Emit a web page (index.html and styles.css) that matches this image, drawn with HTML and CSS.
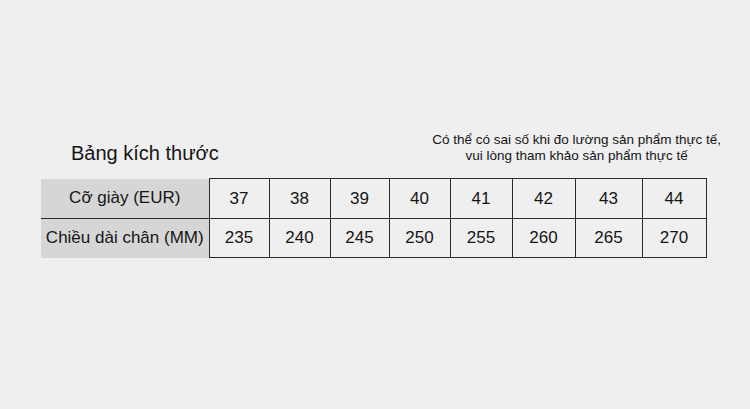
FILE: index.html
```html
<!DOCTYPE html>
<html lang="vi">
<head>
<meta charset="utf-8">
<link rel="stylesheet" href="styles.css">
</head>
<body>
<div class="page">
  <div class="head">
    <div class="title">Bảng kích thước</div>
    <div class="note">Có thể có sai số khi đo lường sản phẩm thực tế,<br>vui lòng tham khảo sản phẩm thực tế</div>
  </div>
  <table class="sizes">
    <colgroup>
      <col class="c0"><col class="c1"><col class="c2"><col class="c3"><col class="c4"><col class="c5"><col class="c6"><col class="c7"><col class="c8">
    </colgroup>
    <tr class="r1">
      <th>Cỡ giày (EUR)</th>
      <td>37</td><td>38</td><td>39</td><td>40</td><td>41</td><td>42</td><td>43</td><td>44</td>
    </tr>
    <tr class="r2">
      <th>Chiều dài chân (MM)</th>
      <td>235</td><td>240</td><td>245</td><td>250</td><td>255</td><td>260</td><td>265</td><td>270</td>
    </tr>
  </table>
</div>
</body>
</html>
```
FILE: styles.css
```css
html, body {
  margin: 0;
  padding: 0;
  background: #efefef;
}
body {
  width: 750px;
  height: 409px;
  font-family: "Liberation Sans", Arial, sans-serif;
  color: #151515;
}
.page {
  padding: 131px 30px 0 41px;
}
.head {
  display: flex;
  justify-content: space-between;
  align-items: flex-end;
  height: 36px;
}
.title {
  margin-left: 30px;
  font-size: 20px;
  line-height: 24px;
  margin-bottom: 2px;
}
.note {
  font-size: 13.5px;
  line-height: 16px;
  text-align: center;
  margin-bottom: 3px;
  margin-right: -1px;
}
.sizes {
  margin-top: 11px;
  border-collapse: collapse;
  table-layout: fixed;
  width: 665px;
}
.c0 { width: 168px; }
.c1 { width: 60px; }
.c2 { width: 61px; }
.c3 { width: 59px; }
.c4 { width: 61px; }
.c5 { width: 62px; }
.c6 { width: 63px; }
.c7 { width: 67px; }
.c8 { width: 64px; }
.sizes th {
  background: #d6d6d6;
  font-weight: normal;
  font-size: 17px;
  padding: 0;
  text-align: center;
  white-space: nowrap;
}
.sizes td {
  border: 1.5px solid #2b2b2b;
  font-size: 17px;
  text-align: center;
  padding: 0;
}
.r1 th { border-bottom: 1.5px solid #2b2b2b; }
.r1 { height: 40px; }
.r2 { height: 39px; }
```
